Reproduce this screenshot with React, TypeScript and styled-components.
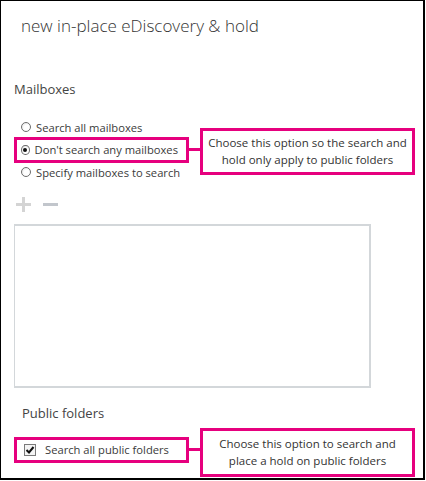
import React from "react";
import styled, {createGlobalStyle} from "styled-components";

const GlobalStyle = createGlobalStyle`
  html, body {
    margin: 0;
    padding: 0;
    background: #fff;
  }
  body {
    font-family: "Open Sans", "Noto Sans", sans-serif;
    color: #333;
  }
`;

const PINK = "#e6007e";

const Frame = styled.div`
  box-sizing: border-box;
  width: 425px;
  height: 480px;
  border-style: solid;
  border-color: #000;
  border-width: 1px 2px 2px 1px;
  position: relative;
  padding: 0 0 0 13px;
`;

const Title = styled.h1`
  margin: 0;
  padding: 13px 0 0 7px;
  font-size: 17px;
  line-height: 24px;
  font-weight: 300;
  color: #333;
  height: 79px;
  box-sizing: border-box;
`;

const SectionTitle = styled.h2<{indent?: number}>`
  margin: 0;
  padding-left: ${p => p.indent || 0}px;
  font-size: 13px;
  line-height: 18px;
  font-weight: 400;
  color: #444;
`;

const OptionList = styled.div<{top?: number}>`
  display: flex;
  flex-direction: column;
  align-items: flex-start;
  padding-top: ${p => p.top ?? 18}px;
`;

const Option = styled.label<{marked?: boolean}>`
  position: relative;
  box-sizing: border-box;
  display: inline-flex;
  align-items: center;
  gap: 5px;
  height: ${p => (p.marked ? 26 : 22.5)}px;
  width: ${p => (p.marked ? "175px" : "auto")};
  margin: ${p => (p.marked ? "-1.75px 0" : "0")};
  padding: 0 8px 0 ${p => (p.marked ? 4 : 7)}px;
  border: ${p => (p.marked ? `3px solid ${PINK}` : "none")};
  font-size: 11.2px;
  color: #3a3a3a;
  white-space: nowrap;
`;

const Radio = styled.span<{checked?: boolean}>`
  box-sizing: border-box;
  width: 10px;
  height: 10px;
  border-radius: 50%;
  border: 1px solid #6d6d6d;
  background: radial-gradient(circle at 60% 60%, #fff 40%, #dcdcdc 100%);
  display: flex;
  align-items: center;
  justify-content: center;
  &::after {
    content: "";
    width: 4px;
    height: 4px;
    border-radius: 50%;
    background: ${p => (p.checked ? "#111" : "transparent")};
  }
`;

const Checkbox = styled.span`
  box-sizing: border-box;
  width: 12px;
  height: 12px;
  border: 1px solid #7a7a7a;
  background: #f4f4f4;
  display: flex;
  align-items: center;
  justify-content: center;
  margin: 0 4px 0 3px;
`;

const Connector = styled.span`
  position: absolute;
  left: 100%;
  top: 50%;
  width: 14px;
  height: 3px;
  margin-top: -1.5px;
  background: ${PINK};
`;

const Callout = styled.div<{tall?: boolean}>`
  position: absolute;
  left: calc(100% + 14px);
  top: -12px;
  box-sizing: border-box;
  width: 215px;
  height: ${p => (p.tall ? 49 : 47)}px;
  border: 3px solid ${PINK};
  background: #fff;
  display: flex;
  align-items: center;
  justify-content: center;
  text-align: center;
  font-size: 11.5px;
  line-height: 17px;
  color: #333;
`;

const Toolbar = styled.div`
  display: flex;
  align-items: center;
  gap: 12px;
  height: 20px;
  margin: 11px 0 0 2px;
`;

const ListBox = styled.div`
  box-sizing: border-box;
  width: 357px;
  height: 164px;
  margin-top: 9px;
  border: 2px solid #d3d7da;
  border-left-width: 1px;
`;

const Spacer = styled.div<{h: number}>`
  height: ${p => p.h}px;
`;

const PlusIcon = () => (
  <svg width="15" height="15" viewBox="0 0 15 15">
    <rect x="6" y="0" width="3" height="15" fill="#d4d4d4" />
    <rect x="0" y="6" width="15" height="3" fill="#d4d4d4" />
  </svg>
);

const MinusIcon = () => (
  <svg width="15" height="15" viewBox="0 0 15 15">
    <rect x="0" y="6" width="15" height="3" fill="#c2c6cc" />
  </svg>
);

const Tick = () => (
  <svg width="10" height="10" viewBox="0 0 10 10">
    <path d="M1.5 5 L4 7.5 L8.5 2" stroke="#111" strokeWidth="2" fill="none" />
  </svg>
);

export default function App() {
  return (
    <>
      <GlobalStyle />
      <Frame>
        <Title>new in-place eDiscovery &amp; hold</Title>
        <SectionTitle>Mailboxes</SectionTitle>
        <OptionList>
          <Option>
            <Radio />
            Search all mailboxes
          </Option>
          <Option marked>
            <Radio checked />
            Don't search any mailboxes
            <Connector />
            <Callout>
              Choose this option so the search and
              <br />
              hold only apply to public folders
            </Callout>
          </Option>
          <Option>
            <Radio />
            Specify mailboxes to search
          </Option>
        </OptionList>
        <Toolbar>
          <PlusIcon />
          <MinusIcon />
        </Toolbar>
        <ListBox />
        <Spacer h={16} />
        <SectionTitle indent={8}>Public folders</SectionTitle>
        <OptionList top={17}>
          <Option marked>
            <Checkbox>
              <Tick />
            </Checkbox>
            Search all public folders
            <Connector />
            <Callout tall>
              Choose this option to search and
              <br />
              place a hold on public folders
            </Callout>
          </Option>
        </OptionList>
      </Frame>
    </>
  );
}
